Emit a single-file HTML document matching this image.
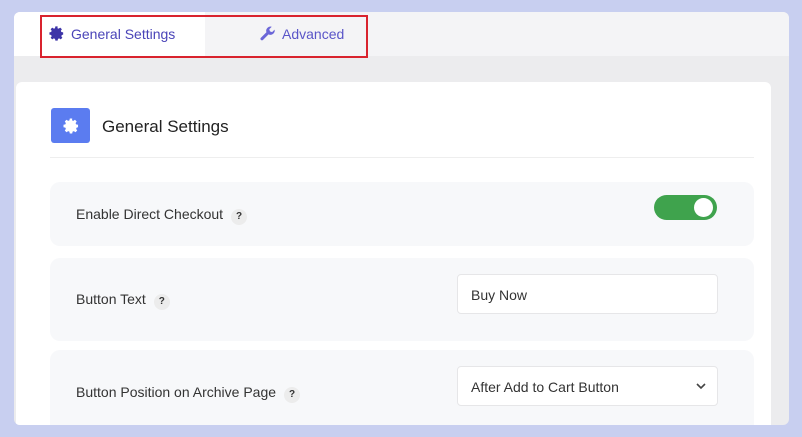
<!DOCTYPE html>
<html><head><style>
*{margin:0;padding:0;box-sizing:border-box}
body{width:802px;height:437px;background:#c8cff0;font-family:"Liberation Sans",sans-serif;position:relative;overflow:hidden}
.screen{position:absolute;left:14px;top:12px;width:775px;height:413px;background:#ececee;border-radius:6px;overflow:hidden}
.tabbar{position:absolute;left:0;top:0;width:775px;height:44px;background:#f4f4f6}
.tab1{position:absolute;left:0;top:0;width:191px;height:44px;background:#fff}
.tabt{position:absolute;top:13px;font-size:14px;color:#4a44b8;display:flex;align-items:center;gap:6px}
.redbox{position:absolute;left:26px;top:3px;width:328px;height:43px;border:2px solid #d9232e}
.card{position:absolute;left:2px;top:70px;width:755px;height:360px;background:#fff;border-radius:6px}
.hicon{position:absolute;left:35px;top:26px;width:39px;height:35px;background:#5b7cf0;border-radius:3px;display:flex;align-items:center;justify-content:center}
.htitle{position:absolute;left:86px;top:35px;font-size:17px;color:#222}
.div{position:absolute;left:34px;top:75px;width:704px;height:1px;background:#eee}
.row{position:absolute;left:34px;width:704px;background:#f7f8fa;border-radius:10px}
.lbl{position:absolute;left:26px;font-size:14px;color:#333}
.q{display:inline-block;width:16px;height:16px;border-radius:50%;background:#ececec;font-size:10px;font-weight:bold;text-align:center;line-height:16px;margin-left:8px;color:#333}
.inp{position:absolute;left:407px;width:261px;height:40px;background:#fff;border:1px solid #e6e6e8;border-radius:4px;font-size:14px;color:#333;padding:12px 13px}
.tog{position:absolute;left:604px;top:13px;width:63px;height:25px;border-radius:13px;background:#3fa34d}
.tog::after{content:"";position:absolute;right:4px;top:3px;width:19px;height:19px;border-radius:50%;background:#fff}
</style></head><body>
<div class="screen">
 <div class="tabbar"><div class="tab1"></div>
  <div class="tabt" style="left:34px"><svg width="17" height="17" viewBox="0 0 24 24"><path fill="#3d34a8" d="M12 8a4 4 0 100 8 4 4 0 000-8zm9.4 5.6v-3.2l-2.6-.5a7 7 0 00-.7-1.7l1.5-2.2-2.3-2.3-2.2 1.5a7 7 0 00-1.7-.7L13.6 2h-3.2l-.5 2.5a7 7 0 00-1.7.7L6 3.7 3.7 6l1.5 2.2a7 7 0 00-.7 1.7l-2.5.5v3.2l2.5.5c.2.6.4 1.2.7 1.7L3.7 18 6 20.3l2.2-1.5c.5.3 1.1.5 1.7.7l.5 2.5h3.2l.5-2.5c.6-.2 1.2-.4 1.700-.7l2.2 1.5 2.3-2.3-1.5-2.2c.3-.5.5-1.1.7-1.7z"/></svg>General Settings</div>
  <div class="tabt" style="left:245px;color:#5a55c8"><svg width="17" height="17" viewBox="0 0 24 24"><path fill="#6b66d8" d="M22 6.5l-3.5 3.5-3-1-1-3L18 2.5a6 6 0 00-7.5 7.7L2.7 18a2 2 0 003 3l7.8-7.8A6 6 0 0022 6.5z"/></svg>Advanced</div>
 </div>
 <div class="redbox"></div>
 <div class="card">
  <div class="hicon"><svg width="18" height="18" viewBox="0 0 24 24"><path fill="#fff" d="M12 8.5a3.5 3.5 0 100 7 3.5 3.5 0 000-7zm9.4 5.1v-3.2l-2.6-.5a7 7 0 00-.7-1.7l1.5-2.2-2.3-2.3-2.2 1.5a7 7 0 00-1.7-.7L13.6 2h-3.2l-.5 2.5a7 7 0 00-1.7.7L6 3.7 3.7 6l1.5 2.2a7 7 0 00-.7 1.7l-2.5.5v3.2l2.5.5c.2.6.4 1.2.7 1.7L3.7 18 6 20.3l2.2-1.5c.5.3 1.1.5 1.7.7l.5 2.5h3.2l.5-2.5c.6-.2 1.2-.4 1.7-.7l2.2 1.5 2.3-2.3-1.5-2.2c.3-.5.5-1.1.7-1.7z"/></svg></div>
  <div class="htitle">General Settings</div>
  <div class="div"></div>
  <div class="row" style="top:100px;height:64px"><div class="lbl" style="top:24px">Enable Direct Checkout<span class="q">?</span></div><div class="tog"></div></div>
  <div class="row" style="top:176px;height:83px"><div class="lbl" style="top:33px">Button Text<span class="q">?</span></div><div class="inp" style="top:16px">Buy Now</div></div>
  <div class="row" style="top:268px;height:90px"><div class="lbl" style="top:34px">Button Position on Archive Page<span class="q">?</span></div><div class="inp" style="top:16px">After Add to Cart Button<svg style="position:absolute;right:10px;top:15px" width="12" height="8" viewBox="0 0 12 8"><path d="M2 2l4 4 4-4" stroke="#444" stroke-width="1.6" fill="none"/></svg></div></div>
 </div>
</div>
</body></html>
